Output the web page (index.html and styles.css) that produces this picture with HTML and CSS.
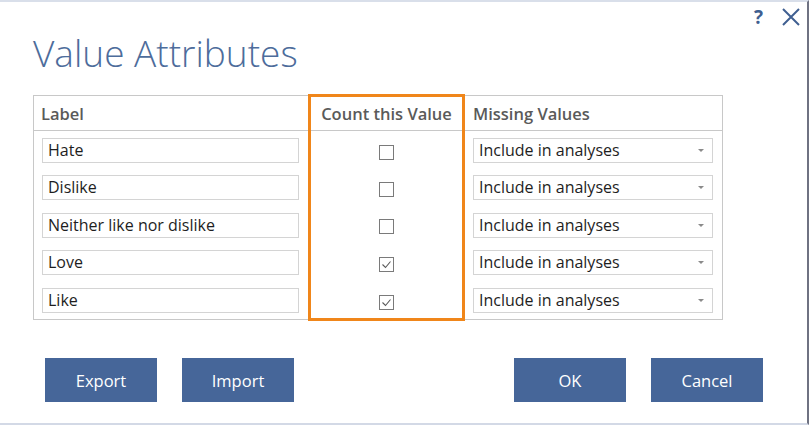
FILE: index.html
```html
<!DOCTYPE html>
<html>
<head>
<meta charset="utf-8">
<link rel="stylesheet" href="styles.css">
</head>
<body>
<div class="dialog">
  <div class="titlebar">
    <span class="help">?</span>
    <svg class="close" width="18" height="18" viewBox="0 0 18 18"><path d="M1 1 L17 17 M17 1 L1 17" stroke="#3f5f91" stroke-width="2" fill="none"/></svg>
  </div>
  <h1 class="title">Value Attributes</h1>
  <table class="grid">
    <colgroup>
      <col class="c-label">
      <col class="c-count">
      <col class="c-missing">
    </colgroup>
    <thead>
      <tr>
        <th class="col-label">Label</th>
        <th class="col-count">Count this Value</th>
        <th class="col-missing">Missing Values</th>
      </tr>
    </thead>
    <tbody>
      <tr>
        <td class="col-label"><div class="field">Hate</div></td>
        <td class="col-count"><span class="check"></span></td>
        <td class="col-missing"><div class="select">Include in analyses<span class="caret"></span></div></td>
      </tr>
      <tr>
        <td class="col-label"><div class="field">Dislike</div></td>
        <td class="col-count"><span class="check"></span></td>
        <td class="col-missing"><div class="select">Include in analyses<span class="caret"></span></div></td>
      </tr>
      <tr>
        <td class="col-label"><div class="field">Neither like nor dislike</div></td>
        <td class="col-count"><span class="check"></span></td>
        <td class="col-missing"><div class="select">Include in analyses<span class="caret"></span></div></td>
      </tr>
      <tr>
        <td class="col-label"><div class="field">Love</div></td>
        <td class="col-count"><span class="check"><svg width="13" height="13" viewBox="0 0 13 13"><path d="M2.5 6.5 L5.5 9.5 L10.5 3.5" stroke="#5a5a5a" stroke-width="1.1" fill="none"/></svg></span></td>
        <td class="col-missing"><div class="select">Include in analyses<span class="caret"></span></div></td>
      </tr>
      <tr class="last">
        <td class="col-label"><div class="field">Like</div></td>
        <td class="col-count"><span class="check"><svg width="13" height="13" viewBox="0 0 13 13"><path d="M2.5 6.5 L5.5 9.5 L10.5 3.5" stroke="#5a5a5a" stroke-width="1.1" fill="none"/></svg></span></td>
        <td class="col-missing"><div class="select">Include in analyses<span class="caret"></span></div></td>
      </tr>
    </tbody>
  </table>
  <div class="buttons">
    <div class="group">
      <button class="btn">Export</button>
      <button class="btn">Import</button>
    </div>
    <div class="group">
      <button class="btn">OK</button>
      <button class="btn">Cancel</button>
    </div>
  </div>
</div>
</body>
</html>
```
FILE: styles.css
```css
html, body {
  margin: 0;
  padding: 0;
  background: #ffffff;
}
.dialog {
  width: 809px;
  height: 425px;
  box-sizing: border-box;
  border-top: 2px solid #d9dfea;
  border-bottom: 2px solid #d3d9e6;
  border-right: 2px solid #6f7282;
  background: #ffffff;
  font-family: "Open Sans", "Noto Sans", sans-serif;
  display: flex;
  flex-direction: column;
  padding-left: 33px;
}
.titlebar {
  height: 22px;
  display: flex;
  justify-content: flex-end;
  align-items: center;
  gap: 19px;
  padding-right: 7px;
  padding-top: 4px;
}
.help {
  font-family: "Open Sans", sans-serif;
  font-weight: 700;
  font-size: 19px;
  line-height: 18px;
  color: #3f5f91;
}
.close {
  display: block;
}
.title {
  margin: 3px 0 0 0;
  font-size: 37px;
  font-weight: 300;
  line-height: 44px;
  color: #4d6c9b;
  height: 44px;
}
.grid {
  margin-top: 19px;
  border-collapse: collapse;
  width: 689px;
  table-layout: fixed;
  border: 1px solid #c8c8c8;
}
.c-label { width: 276px; }
.c-count { width: 154px; }
.c-missing { width: 259px; }
.grid th {
  height: 33px;
  padding: 0 0 0 7px;
  text-align: left;
  font-size: 16.5px;
  font-weight: 600;
  color: #5a5a5a;
  border-bottom: 1px solid #c8c8c8;
  border-right: 1px solid #c8c8c8;
  white-space: nowrap;
}
.grid th.col-count {
  text-align: center;
  padding: 0;
}
.grid th.col-missing { padding-left: 8px; }
.grid td {
  height: 37.3px;
  padding: 3px 0 0 0;
  box-sizing: border-box;
}
.grid td.col-label { padding-left: 8px; padding-right: 9px; border-right: 1px solid #c8c8c8; }
.grid td.col-missing { padding-left: 8px; padding-right: 9px; }
.grid td.col-count { text-align: center; }
.grid .col-count {
  border-left: 3px solid #f0861a;
  border-right: 3px solid #f0861a;
}
.grid th.col-count { border-top: 3px solid #f0861a; }
.grid tr.last td { height: 40px; }
.grid tr.last td.col-count { border-bottom: 3px solid #f0861a; }
.field, .select {
  height: 25px;
  box-sizing: border-box;
  border: 1px solid #d4d4d4;
  font-size: 16px;
  line-height: 23px;
  padding-left: 5px;
  color: #1e1e1e;
  background: #fff;
  white-space: nowrap;
}
.select {
  display: flex;
  justify-content: space-between;
  align-items: center;
  padding-right: 8px;
}
.caret {
  width: 0;
  height: 0;
  border-left: 3px solid transparent;
  border-right: 3px solid transparent;
  border-top: 3px solid #8a8a8a;
}
.check {
  display: inline-flex;
  width: 15px;
  height: 15px;
  box-sizing: border-box;
  border: 1px solid #7a7a7a;
  background: #fff;
  vertical-align: middle;
  align-items: center;
  justify-content: center;
}
.check svg { display: block; }
.buttons {
  margin-top: 37px;
  display: flex;
  justify-content: space-between;
  padding-left: 12px;
  padding-right: 44px;
}
.group {
  display: flex;
  gap: 25px;
}
.btn {
  width: 112px;
  height: 44px;
  border: none;
  background: #466699;
  color: #ffffff;
  font-family: "Open Sans", "Noto Sans", sans-serif;
  font-size: 16.5px;
  padding: 0;
}
```
